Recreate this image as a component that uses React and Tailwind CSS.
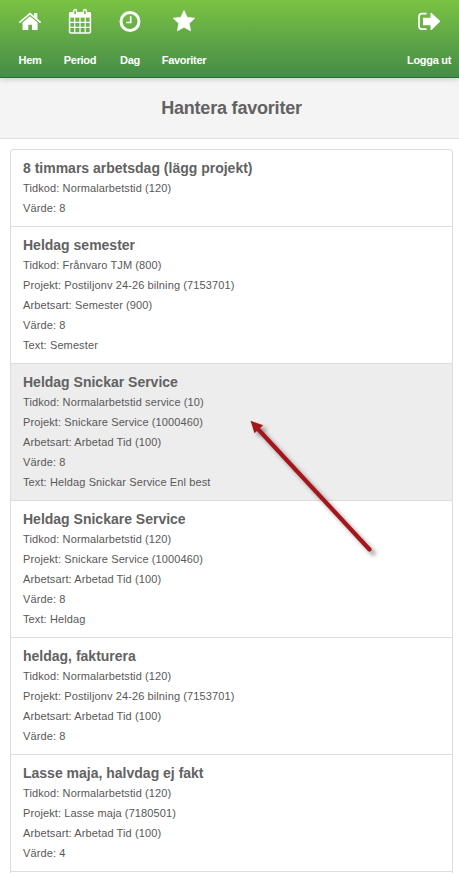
import React from 'react';

const favorites = [
  {
    title: '8 timmars arbetsdag (lägg projekt)',
    lines: ['Tidkod: Normalarbetstid (120)', 'Värde: 8'],
  },
  {
    title: 'Heldag semester',
    lines: [
      'Tidkod: Frånvaro TJM (800)',
      'Projekt: Postiljonv 24-26 bilning (7153701)',
      'Arbetsart: Semester (900)',
      'Värde: 8',
      'Text: Semester',
    ],
  },
  {
    title: 'Heldag Snickar Service',
    active: true,
    lines: [
      'Tidkod: Normalarbetstid service (10)',
      'Projekt: Snickare Service (1000460)',
      'Arbetsart: Arbetad Tid (100)',
      'Värde: 8',
      'Text: Heldag Snickar Service Enl best',
    ],
  },
  {
    title: 'Heldag Snickare Service',
    lines: [
      'Tidkod: Normalarbetstid (120)',
      'Projekt: Snickare Service (1000460)',
      'Arbetsart: Arbetad Tid (100)',
      'Värde: 8',
      'Text: Heldag',
    ],
  },
  {
    title: 'heldag, fakturera',
    lines: [
      'Tidkod: Normalarbetstid (120)',
      'Projekt: Postiljonv 24-26 bilning (7153701)',
      'Arbetsart: Arbetad Tid (100)',
      'Värde: 8',
    ],
  },
  {
    title: 'Lasse maja, halvdag ej fakt',
    lines: [
      'Tidkod: Normalarbetstid (120)',
      'Projekt: Lasse maja (7180501)',
      'Arbetsart: Arbetad Tid (100)',
      'Värde: 4',
    ],
  },
];

function HomeIcon() {
  return (
    <svg width="24" height="26" viewBox="0 0 24 26" fill="currentColor">
      <path d="M12 8.2 19.6 14.6V21.6q0 .5-.5.5H14V16.800H10.300V22.100H5q-.5 0-.5-.5V14.600Z" />
      <path d="M1.900 14.100 12 5.700 22.100 14.100" fill="none" stroke="currentColor" strokeWidth="1.700" strokeLinecap="round" />
      <path d="M16.200 4.900H19.300V11L16.200 8.400Z" />
    </svg>
  );
}

function CalendarIcon() {
  return (
    <svg width="24" height="26" viewBox="0 0 24 26" fill="none" stroke="currentColor">
      <rect x="1.600" y="4.700" width="20.800" height="20.300" rx="1.200" strokeWidth="1.500" />
      <path d="M1.200 4.500H22.800V9.600H1.200Z" fill="currentColor" stroke="none" />
      <path d="M1.500 14.300H22.500M1.500 19.300H22.500M6.700 9V24.800M12 9V24.800M17.200 9V24.800" strokeWidth="1.200" />
      <rect x="5.700" y="1.500" width="2.800" height="5.500" rx="1.300" fill="#70b544" strokeWidth="1.300" />
      <rect x="15.500" y="1.500" width="2.800" height="5.500" rx="1.300" fill="#70b544" strokeWidth="1.300" />
    </svg>
  );
}

function ClockIcon() {
  return (
    <svg width="24" height="26" viewBox="0 0 24 26" fill="none" stroke="currentColor">
      <circle cx="12" cy="13.500" r="9" strokeWidth="3" />
      <path d="M12.700 8.200V14.500H8.300" strokeWidth="1.700" />
    </svg>
  );
}

function StarIcon() {
  return (
    <svg width="24" height="26" viewBox="0 0 24 26" fill="currentColor" stroke="currentColor" strokeWidth=".7" strokeLinejoin="round">
      <path d="M12 2.500 15.100 9.300 22.700 10.200 17.200 15.400 18.600 22.800 12 19.200 5.400 22.800 6.800 15.400 1.300 10.200 8.900 9.300Z" />
    </svg>
  );
}

function LogoutIcon() {
  return (
    <svg width="24" height="26" viewBox="0 0 24 26" fill="currentColor">
      <path d="M9.600 5.700H5.200Q2 5.700 2 8.700V18.200Q2 21.200 5.200 21.200H9.600" fill="none" stroke="currentColor" strokeWidth="1.700" />
      <path d="M6.500 9.700H13.500V5.200Q13.800 4.400 14.600 5L22.900 12.700Q23.300 13.300 22.900 13.800L14.600 21.900Q13.800 22.400 13.500 21.500V17.200H6.500Q6 17.200 6 16.700V10.200Q6 9.700 6.500 9.700Z" />
    </svg>
  );
}

function NavItem({ icon, label, className }) {
  return (
    <a href="#" className={`flex flex-col items-center pt-2 ${className}`}>
      {icon}
      <span className="mt-[18px] whitespace-nowrap text-[11px] leading-4 font-bold tracking-[-0.3px]">{label}</span>
    </a>
  );
}

// Annotation arrow over the highlighted favorite
function PointerArrow() {
  return (
    <svg className="absolute top-[412px] left-[242px] pointer-events-none" width="144" height="156" viewBox="242 412 144 156">
      <defs>
        <filter id="arrowShadow" x="-20%" y="-20%" width="140%" height="140%">
          <feDropShadow dx="4" dy="4" stdDeviation="2" floodColor="#000" floodOpacity=".4" />
        </filter>
      </defs>
      <g filter="url(#arrowShadow)">
        <path d="M257 428 369.500 549.500" stroke="#a3171e" strokeWidth="4.200" strokeLinecap="round" />
        <path d="M250.500 420.800 263.200 425.300 254.500 433.200Z" fill="#a3171e" />
      </g>
    </svg>
  );
}

export default function App() {
  return (
    <div className="relative h-[873px] overflow-hidden bg-white font-['Liberation_Sans',Arial,sans-serif] text-[#626262]">
      <header className="relative flex h-[78px] justify-between border-b border-[#2b6b35] bg-linear-to-b from-[#7bc342] to-[#458c48] pl-[5px] text-white shadow-[0_1px_6px_rgba(0,0,0,0.2)]">
        <nav className="flex">
          <NavItem className="w-[50px]" icon={<HomeIcon />} label="Hem" />
          <NavItem className="w-[50px]" icon={<CalendarIcon />} label="Period" />
          <NavItem className="w-[50px]" icon={<ClockIcon />} label="Dag" />
          <NavItem className="w-[58px]" icon={<StarIcon />} label="Favoriter" />
        </nav>
        <NavItem className="w-[60px]" icon={<LogoutIcon />} label="Logga ut" />
      </header>

      <div className="flex h-[61px] items-center justify-center border-b border-[#ddd] bg-[#f4f4f4] pl-1">
        <h1 className="text-[18px] leading-6 font-bold tracking-[-0.2px]">Hantera favoriter</h1>
      </div>

      <ul className="mt-[10px] mr-[6px] ml-[10px] rounded-t border border-b-0 border-[#ddd]">
        {favorites.map((f) => (
          <li key={f.title} className={`border-b border-[#ddd] px-3 py-2 ${f.active ? 'bg-[#ededed]' : ''}`}>
            <h2 className="text-[14px] leading-5 font-bold">{f.title}</h2>
            {f.lines.map((line) => (
              <p key={line} className="text-[11px] leading-5 tracking-[0.11px] text-[#585858]">{line}</p>
            ))}
          </li>
        ))}
        <li className="h-2" />
      </ul>

      <PointerArrow />
    </div>
  );
}
